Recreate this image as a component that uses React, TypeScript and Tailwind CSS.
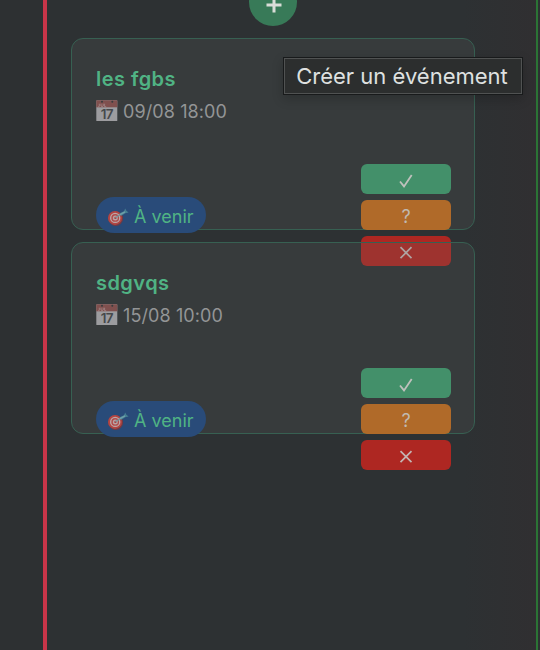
import React from "react";

function CalendarIcon() {
  return (
    <svg width="22" height="22" viewBox="0 0 22 22" className="shrink-0">
      <rect x="0.3" y="0.3" width="21" height="20.7" rx="0.6" fill="#9c9c9f" />
      <rect x="0.3" y="0.3" width="21" height="7" fill="#80504e" />
      <circle cx="6" cy="1.8" r="1" fill="#383c3e" />
      <circle cx="16.3" cy="1.8" r="1" fill="#383c3e" />
      <path d="M3.3 3.7v2.4q0 1-1.4.8M5 3.7v2.3q1.2 1.4 2.2 0V3.7M8.6 3.7v3h1.6" fill="none" stroke="#a58b8b" strokeWidth="0.8" />
      <text x="10.7" y="18.6" textAnchor="middle" fontSize="13.5" fontWeight="600" letterSpacing="-0.7" fill="#46494b" fontFamily="Inter, sans-serif">17</text>
    </svg>
  );
}

function TargetIcon() {
  return (
    <svg width="22" height="20" viewBox="0 0 22 20" className="shrink-0">
      <ellipse cx="8.7" cy="11.6" rx="7.4" ry="7.4" fill="#713b43" />
      <ellipse cx="8" cy="10.9" rx="7" ry="7" fill="#b34543" />
      <ellipse cx="8.2" cy="10.9" rx="5.2" ry="5.2" fill="#bca9a9" />
      <ellipse cx="8.2" cy="10.9" rx="3.9" ry="3.9" fill="#b34b4a" />
      <ellipse cx="8.3" cy="10.9" rx="2.5" ry="2.5" fill="#b9a4a5" />
      <ellipse cx="8.4" cy="10.9" rx="1.1" ry="1.2" fill="#ad403f" />
      <path d="M8.5 10.8 L15 6.4" stroke="#77939b" strokeWidth="1.3" />
      <path d="M12.6 6.3 L17 4.2 L18.2 1.4 L19.4 3.8 L21.6 5.4 L18.2 6.3 L14 9Z" fill="#467f91" />
      <path d="M13 7.7 L18 4.8" stroke="#6fa0aa" strokeWidth="1.4" />
    </svg>
  );
}

const action = "flex h-[30px] w-[90px] items-center justify-center rounded-[6px] pt-[3px]";

function EventCard({ title, date }: { title: string; date: string }) {
  return (
    <article className="relative h-[192px] w-[404px] rounded-xl border border-[#376052] bg-[rgba(94,98,102,0.2)] pt-6 pr-[23px] pl-6">
      <div className="h-[101px]">
        <h3 className="h-8 text-[20px] leading-8 font-semibold tracking-[0.45px] text-[#50b384]">{title}</h3>
        <div className="flex h-8 items-center gap-[5px] text-[18px] tracking-[0.1px] text-[#939596]">
          <CalendarIcon />
          <span className="whitespace-nowrap">{date}</span>
        </div>
      </div>
      <div className="flex items-center justify-between">
        <div className="flex h-9 w-[110px] items-center gap-[5px] rounded-full bg-[#294b79] pt-[3px] pl-[11px] text-[18px] whitespace-nowrap text-[#50b384]">
          <TargetIcon />
          <span className="-mt-px">À venir</span>
        </div>
        <div className="flex flex-col gap-1.5">
          <button className={action + " bg-[#43906a]"}>
            <svg width="14" height="14" viewBox="0 0 14 14" fill="none" stroke="#bfc1bd" strokeWidth="1.8" className="mr-px">
              <path d="M1 7.5 L5 12.4 L12.7 1" />
            </svg>
          </button>
          <button className={action + " bg-[#b06a29] text-[18px] text-[#c0b9b0]"}>?</button>
          <button className={action + " bg-[#ae2722]"}>
            <svg width="14" height="14" viewBox="0 0 14 14" fill="none" stroke="#c4b4b2" strokeWidth="1.7" className="mr-px">
              <path d="M1.5 1.2 L12.5 12.2 M12.5 1.2 L1.5 12.2" />
            </svg>
          </button>
        </div>
      </div>
    </article>
  );
}

export default function App() {
  return (
    <div className="relative flex h-[650px] w-[540px] overflow-hidden bg-[#2d3032] font-['Inter','Liberation_Sans',sans-serif]">
      <div className="w-[43px] shrink-0" />
      <main className="flex w-[495px] shrink-0 flex-col border-r-2 border-l-4 border-r-[#2b7435] border-l-[#c83549] bg-linear-to-r from-[#2d3133] from-85% to-[#302f31] pl-6">
        <button className="-mt-[22px] ml-[178px] flex size-12 shrink-0 items-center justify-center rounded-full bg-[#387a58]">
          <svg width="16" height="16" viewBox="0 0 16 16" className="mt-1.5 ml-px">
            <path d="M6.5 0.5h3v6h6v3h-6v6h-3v-6h-6v-3h6z" fill="#d9ddd8" />
          </svg>
        </button>
        <section className="mt-3 flex flex-col gap-3">
          <EventCard title="les fgbs" date="09/08 18:00" />
          <EventCard title="sdgvqs" date="15/08 10:00" />
        </section>
      </main>
      <div className="absolute top-[57px] left-[283px] flex h-[38px] w-[240px] items-center justify-center border border-[#181a1b] bg-[#2c2e2e] pt-px pr-0.5 text-[22px] whitespace-nowrap text-[#dfe1e0] shadow-[inset_0_0_0_1px_#505252,0_4px_12px_rgba(0,0,0,0.2)]">
        Créer un événement
      </div>
    </div>
  );
}
